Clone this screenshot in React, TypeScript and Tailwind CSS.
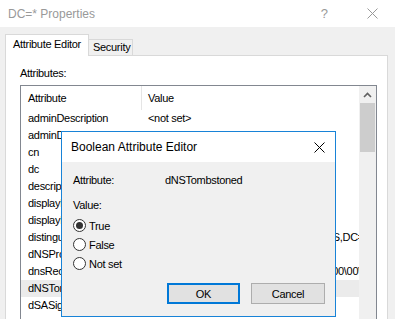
const rows: { name: string; value?: string; shift?: string; selected?: boolean }[] = [
  { name: "adminDescription", value: "<not set>" },
  { name: "adminDisplayName" },
  { name: "cn" },
  { name: "dc" },
  { name: "description" },
  { name: "displayName" },
  { name: "displayNamePrintable" },
  { name: "distinguishedName", value: "DC=*,DC=contoso.com,CN=MicrosoftDNS,DC=", shift: "-mr-[5px]" },
  { name: "dNSProperty" },
  { name: "dnsRecord", value: "\\00\\00\\00\\00\\00\\", shift: "-mr-[2px]" },
  { name: "dNSTombstoned", selected: true },
  { name: "dSASignature" },
]

const CloseIcon = ({ color }: { color: string }) => (
  <svg width="11" height="11" viewBox="0 0 11 11">
    <path d="M0.5 0.5 L10.5 10.5 M10.5 0.5 L0.5 10.5" stroke={color} strokeWidth="1" fill="none" />
  </svg>
)

const Radio = ({ label, checked }: { label: string; checked?: boolean }) => (
  <div className="h-[19px] flex items-center">
    <div className="w-[13px] h-[13px] rounded-full border border-[#333] bg-white flex items-center justify-center">
      {checked && <div className="w-[7px] h-[7px] rounded-full bg-[#333]" />}
    </div>
    <span className="ml-[3px]">{label}</span>
  </div>
)

export default function App() {
  return (
    <div className="relative w-[395px] h-[319px] overflow-hidden bg-[#f0f0f0] font-['Liberation_Sans',Arial,sans-serif] text-black flex flex-col">
      {/* window title */}
      <div className="h-[27px] shrink-0 bg-white flex items-center pl-[8px] text-[12px] text-[#999]">
        <span className="flex-1">DC=* Properties</span>
        <span className="mr-[39px] text-[13px]">?</span>
        <div className="mr-[17px] flex items-center">
          <CloseIcon color="#999" />
        </div>
      </div>

      {/* tabs */}
      <div className="h-[28px] shrink-0 flex items-end pl-[5px] text-[11px] tracking-[-0.3px]">
        <div className="relative z-10 -mb-px h-[22px] w-[84px] bg-white border-x border-t border-[#d9d9d9] flex items-center pl-[7px] pb-[2px]">
          Attribute Editor
        </div>
        <div className="h-[16px] w-[44px] bg-[#f0f0f0] border-t border-r border-[#d9d9d9] flex items-center pl-[4px]">
          Security
        </div>
      </div>

      {/* tab panel */}
      <div className="ml-[5px] w-[383px] flex-1 bg-white border border-[#d9d9d9] px-[14px] text-[11px] tracking-[-0.3px]">
        <div className="pt-[10px] leading-[14px]">Attributes:</div>
        <div className="mt-[5px] w-[357px] h-[250px] border border-[#828790] flex">
          <div className="flex-1 min-w-0">
            <div className="h-[24px] flex">
              <div className="w-[121px] pl-[7px] flex items-center border-r border-[#e5e5e5]">Attribute</div>
              <div className="pl-[6px] flex items-center">Value</div>
            </div>
            {rows.map((r) => (
              <div key={r.name} className={`h-[17px] flex items-center ${r.selected ? "bg-[#ebebeb]" : ""}`}>
                <div className="w-[121px] shrink-0 pl-[7px] whitespace-nowrap overflow-hidden">{r.name}</div>
                <div className={`flex-1 min-w-0 pl-[6px] overflow-hidden whitespace-nowrap flex ${r.shift ? "justify-end" : ""}`}>
                  {r.value && <span className={r.shift ? `${r.shift} shrink-0` : ""}>{r.value}</span>}
                </div>
              </div>
            ))}
          </div>
          <div className="w-[17px] shrink-0 bg-[#f0f0f0] flex flex-col">
            <div className="h-[17px] flex items-center justify-center">
              <svg width="9" height="6" viewBox="0 0 9 6">
                <path d="M1 5 L4.5 1.5 L8 5" stroke="#606060" strokeWidth="1.6" fill="none" />
              </svg>
            </div>
            <div className="h-[49px] mx-px bg-[#cdcdcd]" />
          </div>
        </div>
      </div>

      {/* modal dialog */}
      <div className="absolute left-[61px] top-[131px] w-[275px] h-[186px] border border-[#1883d7] bg-[#f0f0f0] flex flex-col">
        <div className="h-[30px] shrink-0 bg-white flex items-center pl-[9px] text-[12px]">
          <span className="flex-1">Boolean Attribute Editor</span>
          <div className="mr-[10px] flex items-center">
            <CloseIcon color="#000" />
          </div>
        </div>
        <div className="flex-1 pl-[11px] pr-[10px] text-[11px] tracking-[-0.3px] leading-[14px]">
          <div className="pt-[11px] flex">
            <span className="w-[92px]">Attribute:</span>
            <span>dNSTombstoned</span>
          </div>
          <div className="mt-[11px]">Value:</div>
          <div className="mt-[4px]">
            <Radio label="True" checked />
            <Radio label="False" />
            <Radio label="Not set" />
          </div>
          <div className="mt-[10px] flex justify-end gap-[11px]">
            <button className="w-[73px] h-[21px] border-2 border-[#0078d7] bg-[#e1e1e1] flex items-center justify-center">
              OK
            </button>
            <button className="w-[74px] h-[21px] border border-[#adadad] bg-[#e1e1e1] flex items-center justify-center">
              Cancel
            </button>
          </div>
        </div>
      </div>
    </div>
  )
}
